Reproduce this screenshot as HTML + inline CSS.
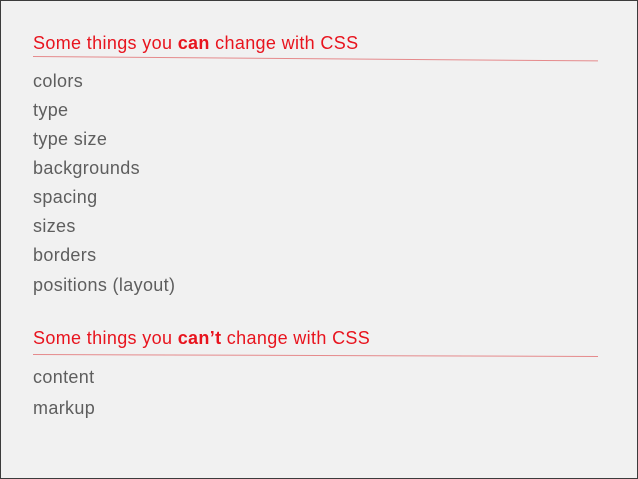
<!DOCTYPE html>
<html><head><style>
html,body{margin:0;padding:0}
body{width:636px;height:477px;background:#f1f1f1;border:1px solid #3c3c3c;position:relative;overflow:hidden;font-family:"Liberation Sans",sans-serif}
.t{position:absolute;left:32px;font-size:18px;letter-spacing:0.35px;white-space:nowrap;line-height:20px}
.h{color:#e8141e}
.i{color:#5e5e5e}
.line{position:absolute;left:32px;width:565px;height:1px;background:#e58a8c;transform-origin:0 0}
</style></head><body>
<div class="t h" style="top:32px">Some things you <b>can</b> change with CSS</div>
<div class="line" style="top:55px;transform:rotate(0.45deg)"></div>
<div class="t i" style="top:70px">colors</div>
<div class="t i" style="top:99px">type</div>
<div class="t i" style="top:128px">type size</div>
<div class="t i" style="top:157px">backgrounds</div>
<div class="t i" style="top:186px">spacing</div>
<div class="t i" style="top:215px">sizes</div>
<div class="t i" style="top:244px">borders</div>
<div class="t i" style="top:274px">positions (layout)</div>
<div class="t h" style="top:327px">Some things you <b>can’t</b> change with CSS</div>
<div class="line" style="top:353px;transform:rotate(0.2deg)"></div>
<div class="t i" style="top:366px">content</div>
<div class="t i" style="top:397px">markup</div>
</body></html>
